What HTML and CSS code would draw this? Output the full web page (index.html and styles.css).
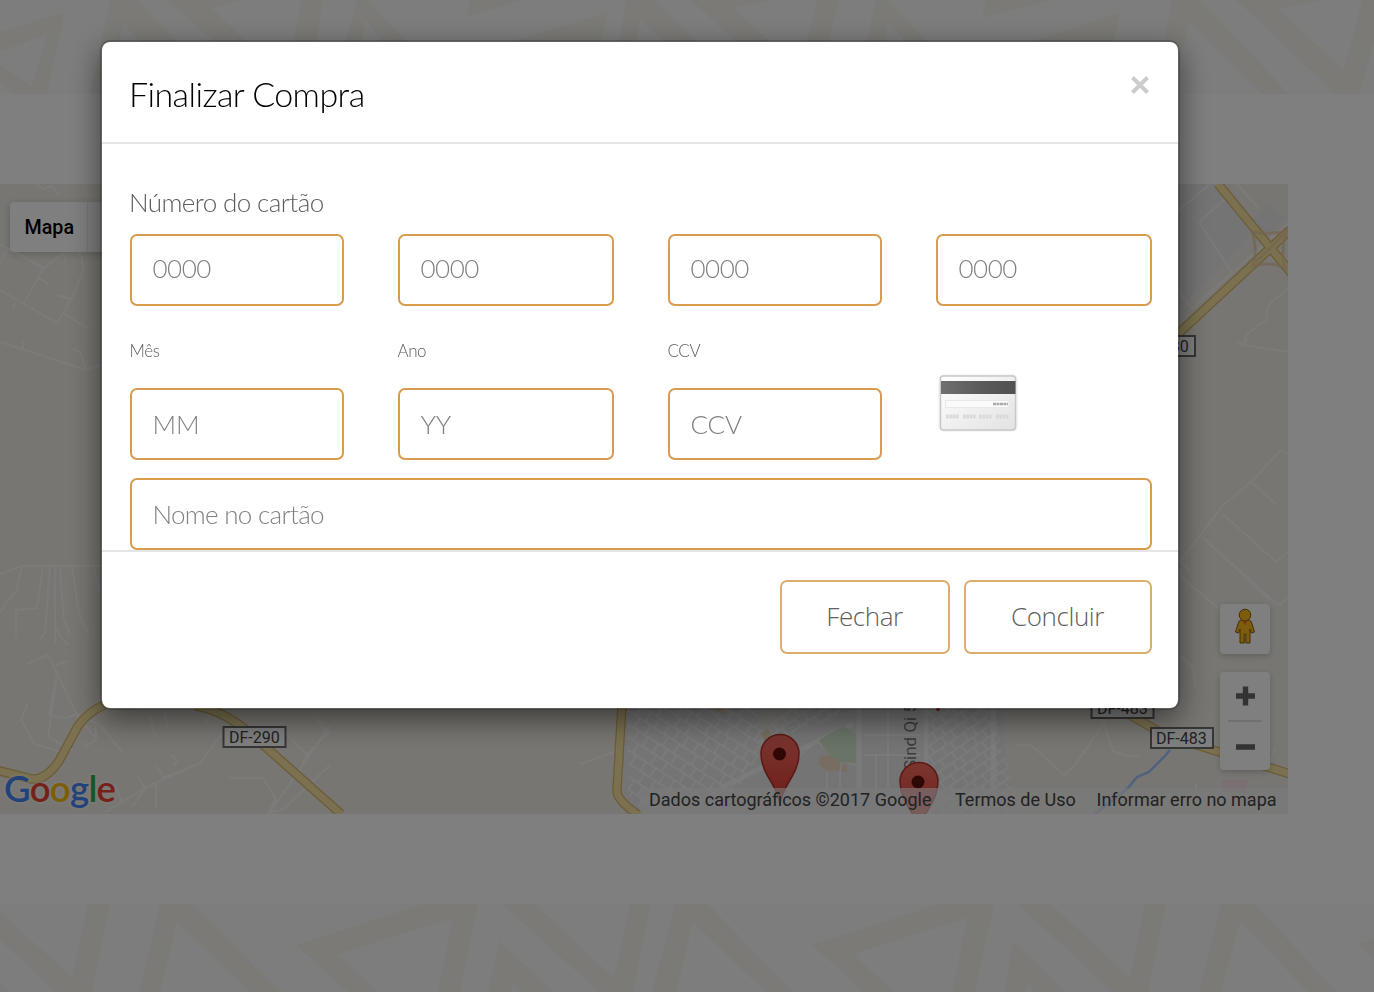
FILE: index.html
```html
<!DOCTYPE html>
<html lang="pt-BR">
<head>
<meta charset="utf-8">
<title>Finalizar Compra</title>
<link rel="stylesheet" href="styles.css">
</head>
<body>
<div class="page">
  <svg class="band band-top" viewBox="0 0 1374 94" fill="#f7f4ee">
    <path fill-rule="evenodd" d="M0 32L65 12 47 94H12L0 82ZM0 52V65L32 86 47 34Z"/>
    <path d="M110 0H138L225 94H185L123 23 110 94H90ZM167 0H240L212 8 265 60H235ZM301 0H323L313 60H290ZM357 0H367L425 60H395L366 20 358 60H340ZM470 0H522L467 17ZM512 42L607 12 598 60H500ZM626 0H655L715 60H685L640 20 632 60H615Z"/>
    <path d="M691 0H772L733 8 790 60H755ZM817 0H839L824 60H802ZM876 0H888L945 60H920L888 22 882 60H862ZM986 0H1053L982 18ZM1031 42L1121 12 1109 60H1000ZM1172 0H1200L1289 94H1262L1189 23 1174 94H1155ZM1236 0H1324L1278 9 1344 70 1362 0H1374V40L1360 94H1335Z"/>
  </svg>

  <section class="map">
    <svg class="map-canvas" viewBox="0 184 1288 630">
      <defs>
        <pattern id="blocks" width="34" height="22" patternUnits="userSpaceOnUse" patternTransform="rotate(33)">
          <path d="M0 1H34M0 12H34M5 1V12M16 1V12M27 1V12M10 12V23M23 12V23" fill="none" stroke="#fff" stroke-width="1.7" stroke-opacity=".65"/>
        </pattern>
        <pattern id="blocks2" width="26" height="18" patternUnits="userSpaceOnUse" patternTransform="rotate(-35)">
          <path d="M0 1H26M0 10H26M5 1V10M15 1V10M10 10V18M22 10V18" fill="none" stroke="#fff" stroke-width="1.7" stroke-opacity=".65"/>
        </pattern>
        <linearGradient id="pin" x1="0" y1="0" x2="0" y2="1"><stop offset="0" stop-color="#f56b60"/><stop offset="1" stop-color="#e13a32"/></linearGradient>
      </defs>
      <path fill="#f0ede5" d="M0 184H1288V814H0Z"/>
      <path fill="#e9e9ea" d="M1178 184H1228L1258 226 1178 310ZM1249 222L1268 204 1286 218 1262 240ZM622 700H1000L1012 814H624Z"/>
      <path fill="#f0ede5" d="M759 700H815L790 722 762 738Z"/>
      <path fill="url(#blocks)" d="M628 700H755L765 742 740 790 700 814H645L628 795Z"/>
      <path fill="url(#blocks2)" d="M785 700H850L835 718 764 742 768 730ZM926 700H993L1012 814H926ZM985 745L1006 755 1015 800H990Z"/>
      <g fill="none" stroke="#fff" stroke-opacity=".5" stroke-width="2">
        <path d="M36 184L44 189 51 186 60 195M0 244L44 268M8 249L0 263M65 252L44 268 24 303M38 277L48 284M0 290L57 323 73 296 83 271 82 258 78 252M57 295L71 299M64 314L88 328M16 301L13 309M63 252L66 262M0 342L86 370 103 364M73 349L80 352 86 370 83 357M22 350L24 341"/>
        <path d="M0 574L22 566H102M22 566L16 592 7 602 0 613M43 567L37 608 16 610V637M50 567L45 633 40 639M55 567V643M60 567L64 620 70 634M72 567L79 614 88 633M93 566L100 590M55 627L63 640 68 645M26 664L48 655 57 673 79 719 96 738M57 673L48 737 73 750M56 665L67 661M57 673L49 715 64 718 79 714M28 703L21 720 34 744 62 752M76 714L100 725 123 753M96 727V740L83 747M150 716L155 737M165 712 167 728M206 723L213 708"/>
        <path d="M105 812L145 788 200 763 225 730M156 766L164 777 186 770M156 782V808M138 776 146 790M172 755L177 760 174 766M115 784 123 804M132 807 145 789M229 778H263L276 799 268 813 284 809 330 765M269 814 330 725M300 770L307 755 330 730M292 740 307 754M318 719 328 735"/>
        <path d="M1178 211L1210 184M1199 222L1224 200M1199 222L1232 273 1288 223M1178 290L1192 309 1232 273M1237 184L1258 208M1288 288L1268 306 1266 320 1247 334 1244 345 1288 352M1238 342 1244 345M1180 562L1223 505 1251 482 1281 450 1288 454M1251 482L1276 504M1223 514L1276 562 1288 552M1202 537L1270 600M1178 574L1218 608M1228 560 1278 605 1288 598M1190 570 1180 562M1180 655L1194 668 1195 686"/>
        <path d="M1016 745H1031L1064 775 1075 765 1104 723 1113 751 1128 756H1139M1275 747 1270 763M1196 784V792L1220 802M580 764 614 752"/>
        <path stroke-width="5" d="M720 788L853 724M859 704V788M926 704V788M993 704V788M760 739L785 767M818 740L835 756 856 764"/>
        <path d="M864 735H920M864 755H920M888 704V788M876 755V788M827 772V788M840 764V788M780 772 812 745"/>
      </g>
      <path fill="#d2e8cd" d="M819 740L843 726 856 734V763L837 762 825 750Z"/>
      <path fill="#f0dbc0" d="M820 755L831 756 840 764V771L826 770 819 765ZM761 733L768 729 772 739 766 744ZM842 765H847V772H842ZM711 710 721 706 726 714Z"/>
      <g fill="none" stroke="#d6b76c" stroke-width="9.500">
        <path d="M-4 770L32 779Q46 780 59 761L78 726Q88 712 104 705M195 706Q226 710 260 742L341 814M622 704 617 790Q616 800 640 816M1218 184L1292 274M1178 334L1290 230M1130 715L1165 735 1290 774"/>
      </g>
      <g fill="none" stroke="#f6e3a1" stroke-width="7">
        <path d="M-4 770L32 779Q46 780 59 761L78 726Q88 712 104 705M195 706Q226 710 260 742L341 814M622 704 617 790Q616 800 640 816M1218 184L1292 274M1178 334L1290 230M1130 715L1165 735 1290 774"/>
      </g>
      <g fill="none" stroke="#e8cba0" stroke-width="3" stroke-opacity=".7"><path d="M1252 232Q1258 250 1253 266Q1270 261 1285 268Q1280 250 1287 231Q1270 235 1252 232ZM1256 262 1284 234"/></g>
      <path d="M1170 750L1164 757 1149 772 1137 777 1128 788 1095 814" fill="none" stroke="#9fc4fb" stroke-width="2.5"/>
      <path d="M1222 780H1247V792H1222Z" fill="#f5dfe2"/>
      <g fill="#fff" stroke="#6c6c6c" stroke-width="2">
        <path d="M223.500 727H285.500V747H223.500ZM1091.500 698H1153.500V718H1091.500ZM1151 728H1213V748H1151ZM1133 336H1195V356H1133Z"/>
      </g>
      <g class="road-label">
        <text x="229" y="743">DF-290</text><text x="1097" y="714">DF-483</text><text x="1156" y="744">DF-483</text><text x="1138" y="352">DF-480</text>
        <text class="street" transform="translate(916 770) rotate(-90)">Sind Qi 5</text>
      </g>
      <path d="M938 704V711" stroke="#d33" stroke-width="3"/>
      <g fill="url(#pin)" stroke="#b4302a" stroke-width="1.5">
        <path d="M780 804C778 786 761 774 761 753.500A19 19 0 0 1 799 753.500C799 774 782 786 780 804Z"/><circle cx="779.500" cy="754" r="6.500" fill="#5e100d" stroke="none"/>
        <path d="M919 832C917 814 900 802 900 781.500A19 19 0 0 1 938 781.500C938 802 921 814 919 832Z"/><circle cx="918" cy="782" r="6.500" fill="#5e100d" stroke="none"/>
      </g>
      <text class="google" x="4" y="802" textLength="112"><tspan fill="#4285f4">G</tspan><tspan fill="#ea4335">o</tspan><tspan fill="#fbbc05">o</tspan><tspan fill="#4285f4">g</tspan><tspan fill="#34a853">l</tspan><tspan fill="#ea4335">e</tspan></text>
    </svg>
    <div class="map-type"><span class="map-type-item">Mapa</span><span class="map-type-next"></span></div>
    <div class="map-controls">
      <div class="pegman">
        <svg width="22" height="36" viewBox="0 0 22 36"><g fill="#fbb917" stroke="#806010" stroke-width="1"><path d="M7 12H15Q17 12 18 16L20.500 24 17.500 25 16 21V35H11.800V26H10.200V35H6V21L4.500 25 1.500 24 4 16Q5 12 7 12Z"/><circle cx="11" cy="7" r="5.800"/></g><path d="M8 12.500H14L11 17Z" fill="#e8701a"/></svg>
      </div>
      <div class="zoom">
        <svg width="50" height="98" viewBox="0 0 50 98"><path d="M16 24H35M25.500 14.500V33.500M16 75H35" stroke="#666" stroke-width="5.400"/><path d="M8 49H42" stroke="#e2e2e2" stroke-width="2"/></svg>
      </div>
    </div>
    <div class="attribution"><span class="credit">Dados cartográficos ©2017 Google</span><span class="terms">Termos de Uso</span><span class="report">Informar erro no mapa</span></div>
  </section>

  <svg class="band band-bottom" viewBox="0 904 1374 88" fill="#f7f4ee">
    <path d="M0 912L72 977 88 904H110L92 992H55L0 940ZM0 982L10 992H0ZM160 904H193L280 992H250L177 922 160 992H139ZM296 945L423 904H478L460 992H438L453 918 338 954 378 992H348ZM502 904H535L614 978 630 904H651L633 992H599ZM499 941L554 992H520L513 983 511 992H488Z"/>
    <path d="M675 904H708L794 992H765L693 922 676 992H652ZM812 945L939 904H994L975 992H952L967 918 853 954 894 992H863ZM1018 904H1051L1130 978 1145 904H1166L1148 992H1112ZM1013 941L1067 992H1034L1028 983 1025 992H1004ZM1221 904H1254L1338 992H1308L1240 922 1221 992H1199ZM1357 945L1374 939V960Z"/>
  </svg>
</div>

<div class="backdrop">
  <form class="modal">
    <header class="modal-header">
      <h1 class="title">Finalizar Compra</h1>
      <button class="close" type="button" aria-label="Fechar janela"><svg width="20" height="20" viewBox="0 0 20 20"><path d="M2.500 2.500L17.500 17.500M17.500 2.500L2.500 17.500" stroke="#ccc" stroke-width="4"/></svg></button>
    </header>
    <div class="modal-body">
      <label class="number-label">Número do cartão</label>
      <div class="row number-row">
        <input class="field" placeholder="0000"><input class="field" placeholder="0000"><input class="field" placeholder="0000"><input class="field" placeholder="0000">
      </div>
      <div class="row label-row"><label>Mês</label><label>Ano</label><label>CCV</label></div>
      <div class="row detail-row">
        <input class="field" placeholder="MM"><input class="field" placeholder="YY"><input class="field" placeholder="CCV">
        <svg class="card" width="84" height="62" viewBox="0 0 84 62">
          <defs><linearGradient id="face" x1="0" y1="0" x2="1" y2="1"><stop offset="0" stop-color="#fff"/><stop offset="1" stop-color="#e2e2e2"/></linearGradient><linearGradient id="stripe"><stop offset="0" stop-color="#707070"/><stop offset=".5" stop-color="#5b5b5b"/><stop offset="1" stop-color="#505050"/></linearGradient></defs>
          <rect x="3.500" y="3.500" width="77" height="55" rx="4" fill="none" stroke="#eee" stroke-width="2"/>
          <rect x="4.500" y="4" width="75" height="54" rx="3" fill="url(#face)" stroke="#c8c8c8" stroke-width="1.4"/>
          <path d="M5 9H79.500V22H5Z" fill="url(#stripe)"/><path d="M9.500 28.500H73V35.500H9.500Z" fill="#fafafa" stroke="#e8e8e8"/>
          <path d="M57 32H72" stroke="#aaa" stroke-width="2.600" stroke-dasharray="3 .5"/>
          <path d="M10 44.500H23M27 44.500H40M43 44.500H56M60 44.500H73" stroke="#d9d9d9" stroke-width="4" stroke-dasharray="2.600 .7"/>
        </svg>
      </div>
      <input class="field name" placeholder="Nome no cartão">
    </div>
    <footer class="modal-footer"><button class="btn btn-close" type="button">Fechar</button><button class="btn btn-done" type="button">Concluir</button></footer>
  </form>
</div>
</body>
</html>
```
FILE: styles.css
```css
* { box-sizing: border-box; }
body { margin: 0; height: 992px; overflow: hidden; background: #fff; font-family: Lato, sans-serif; }
.page { height: 992px; }
.band { display: block; width: 1374px; background: #fbfbfb; }
.band-top { height: 94px; }
.band-bottom { height: 88px; }
.map { position: relative; width: 1288px; height: 630px; margin: 90px 0; overflow: hidden; font-family: Roboto, sans-serif; }
.map-canvas { display: block; width: 1288px; height: 630px; }
.road-label { font-size: 16px; fill: #444; }
.road-label .street { fill: #777; font-size: 17px; }
.google { font-family: Lato, sans-serif; font-weight: 600; font-size: 36.5px; stroke: #fff; stroke-opacity: .3; stroke-width: 4px; paint-order: stroke; }
.map-type { position: absolute; left: 10px; top: 18px; display: flex; height: 50px; border-radius: 4px; background: #fff; box-shadow: 0 2px 8px rgba(0,0,0,.2); }
.map-type-item { width: 78px; padding-left: 14.5px; line-height: 51px; font-size: 19.7px; font-weight: 500; color: #000; border-right: 1px solid #ececec; }
.map-type-next { width: 90px; }
.map-controls { position: absolute; right: 18px; top: 420px; display: grid; gap: 18px; }
.pegman, .zoom { width: 50px; border-radius: 4px; background: #fff; box-shadow: 0 2px 6px rgba(0,0,0,.2); }
.pegman { height: 50px; padding: 4px 14px; }
.zoom { height: 98px; }
.attribution { position: absolute; right: 0; bottom: 0; display: flex; height: 26px; line-height: 23px; font-size: 18px; color: #444; white-space: nowrap; }
.attribution span { padding-right: 12px; background: rgba(245,245,245,.65); }
.credit { width: 303px; padding-left: 9px; }
.terms { width: 144px; padding-left: 12px; }
.report { width: 201px; padding-left: 9.5px; }
.backdrop { position: fixed; inset: 0; padding: 40px 0 0 100px; background: rgba(0,0,0,.5); }
.modal { width: 1080px; height: 670px; border: 2px solid rgba(0,0,0,.2); border-radius: 10px; background: #fff; background-clip: padding-box; box-shadow: 0 10px 30px rgba(0,0,0,.5); }
.modal-header { display: flex; justify-content: space-between; height: 102px; padding: 28px; border-bottom: 2px solid #e5e5e5; }
.title { margin: 0 0 0 -1px; font-size: 34px; line-height: 48px; font-weight: 300; letter-spacing: -.58px; color: #000; }
.close { width: 20px; height: 20px; margin-top: 5px; padding: 0; border: 0; background: none; }
.modal-body { height: 406px; padding: 40px 26px 0 28px; color: #5c5c5c; }
.number-label { display: block; height: 50px; margin-left: -1px; line-height: 36px; font-size: 26px; font-weight: 300; letter-spacing: -.6px; }
.row { display: grid; grid-template-columns: 214px 216px 214px 216px; column-gap: 54px; }
.number-row { height: 72px; }
.label-row { height: 82px; padding-top: 35px; line-height: 20px; font-size: 17px; font-weight: 300; letter-spacing: -.45px; }
.label-row label { margin-left: -.5px; }
.detail-row { height: 90px; }
.field { width: 100%; height: 72px; padding: 0 20.5px 4px; border: 2px solid #d99b4d; border-radius: 7px; background: #fff; font: 300 26px Lato, sans-serif; letter-spacing: -.5px; }
.detail-row .field, .name { padding-bottom: 0; }
.detail-row .field { letter-spacing: -.2px; }
.field::placeholder { color: #808080; opacity: 1; }
.card { display: block; margin: -16px 0 0; }
.name { display: block; letter-spacing: -.7px; }
.modal-footer { display: flex; justify-content: flex-end; gap: 14px; height: 158px; padding: 28px 26px; border-top: 2px solid #e5e5e5; }
.btn { height: 74px; padding: 0 1px 2px 0; border: 2px solid #dcae6d; border-radius: 7px; background: #fff; font: 300 26px "Open Sans", sans-serif; letter-spacing: -.4px; color: #606060; }
.btn-close { width: 170px; }
.btn-done { width: 188px; }
```
